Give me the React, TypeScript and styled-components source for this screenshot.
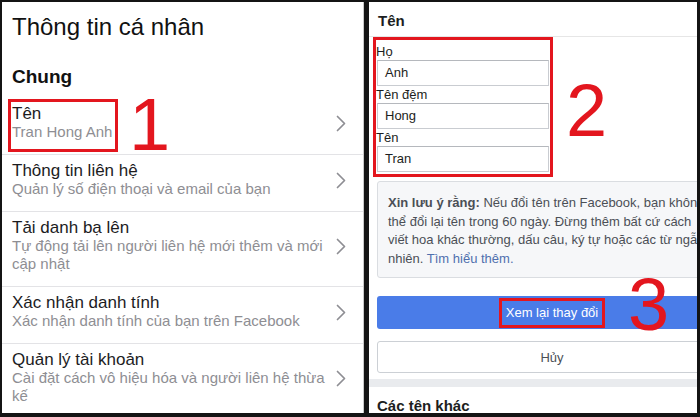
import React from "react";
import styled, { createGlobalStyle } from "styled-components";

const Global = createGlobalStyle`
  html, body { margin: 0; padding: 0; background: #141414; }
  * { box-sizing: border-box; }
`;

const RED = "#e3161e";
const FONT = `"Liberation Sans", Arial, Helvetica, sans-serif`;

const Frame = styled.div`
  width: 700px;
  height: 417px;
  background: #141414;
  display: flex;
  gap: 5px;
  padding: 2px 3px 4px 2px;
  font-family: ${FONT};
`;

const LeftPanel = styled.section`
  position: relative;
  width: 362px;
  height: 100%;
  background: #fff;
  overflow: hidden;
  border-right: 1px solid #c9c9c9;
`;

const PageTitle = styled.h1`
  margin: 0;
  padding: 10px 0 0 10px;
  font-size: 24px;
  line-height: 30px;
  font-weight: 400;
  color: #111;
`;

const SectionTitle = styled.h2`
  margin: 24px 0 10px;
  padding-left: 10px;
  font-size: 19px;
  line-height: 22px;
  font-weight: 700;
  color: #111;
`;

const Row = styled.div`
  position: relative;
  display: flex;
  align-items: center;
  padding: 7px 17px 13px 10px;
  border-bottom: 1px solid #e3e3e6;
`;

const RowText = styled.div`
  flex: 1;
  padding-right: 4px;
`;

const RowTitle = styled.div`
  font-size: 17px;
  line-height: 18px;
  color: #1c1c1e;
`;

const RowSub = styled.div`
  font-size: 15px;
  line-height: 18px;
  color: #8e8e93;
`;

const Highlight = styled.div`
  position: absolute;
  border: 3px solid ${RED};
  pointer-events: none;
`;

const Step = styled.div<{ $left: number; $top: number }>`
  position: absolute;
  left: ${(p) => p.$left}px;
  top: ${(p) => p.$top}px;
  font-family: ${FONT};
  font-size: 74px;
  line-height: 74px;
  color: ${RED};
  pointer-events: none;
`;

const Chevron = () => (
  <svg width="10" height="17" viewBox="0 0 10 17" fill="none">
    <polyline points="1.5,1.5 8.5,8.5 1.5,15.5" stroke="#8e8e93" strokeWidth="1.7" strokeLinecap="round" strokeLinejoin="round" />
  </svg>
);

const RightPanel = styled.section`
  position: relative;
  width: 328px;
  height: 100%;
  background: #fff;
  overflow: hidden;
`;

const Header = styled.div`
  padding: 10px 0 6px 9px;
  font-size: 15px;
  line-height: 18px;
  font-weight: 700;
  color: #1c1e21;
  border-bottom: 1px solid #e6e6e6;
`;

const Body = styled.div`
  width: 358px;
  padding-left: 8px;
`;

const NameForm = styled.div`
  width: 180px;
  margin: 0 0 4px -4px;
  border: 3px solid ${RED};
  padding: 3px 0 2px 0;
`;

const FieldLabel = styled.div`
  font-size: 13px;
  line-height: 17px;
  color: #1c1e21;
`;

const FieldInput = styled.div`
  height: 26px;
  margin: 0 1px;
  border: 1px solid #c9ccd1;
  border-top-color: #b5b8bd;
  padding-left: 7px;
  font-size: 13px;
  line-height: 24px;
  color: #1c1e21;
`;

const Notice = styled.div`
  width: 350px;
  background: #f6f7f9;
  border: 1px solid #dadde1;
  border-radius: 3px;
  padding: 12px 10px 9px;
  font-size: 13px;
  line-height: 18.5px;
  color: #4b4f56;
  white-space: nowrap;
`;

const Link = styled.span`
  color: #4f6fae;
`;

const PrimaryButton = styled.div`
  width: 350px;
  height: 33px;
  margin-top: 18px;
  background: #4a7ce8;
  border-radius: 3px;
  display: flex;
  align-items: center;
  justify-content: center;
  color: #fff;
  font-size: 13px;
`;

const MarkedLabel = styled.span`
  display: inline-block;
  border: 3px solid ${RED};
  padding: 4px 4px;
  line-height: 16px;
`;

const SecondaryButton = styled.div`
  width: 350px;
  height: 32px;
  margin-top: 12px;
  background: #fff;
  border: 1px solid #ccd0d5;
  border-radius: 3px;
  display: flex;
  align-items: center;
  justify-content: center;
  color: #4b4f56;
  font-size: 13px;
`;

const Band = styled.div`
  height: 8px;
  margin-top: 6px;
  background: #e9ebee;
`;

const OtherNames = styled.div`
  padding: 10px 0 0 8px;
  font-size: 15px;
  line-height: 18px;
  font-weight: 700;
  color: #1c1e21;
`;

const rows = [
  { title: "Thông tin liên hệ", sub: "Quản lý số điện thoại và email của bạn" },
  { title: "Tải danh bạ lên", sub: "Tự động tải lên người liên hệ mới thêm và mới cập nhật" },
  { title: "Xác nhận danh tính", sub: "Xác nhận danh tính của bạn trên Facebook" },
  { title: "Quản lý tài khoản", sub: "Cài đặt cách vô hiệu hóa và người liên hệ thừa kế" },
];

const fields = [
  { label: "Họ", value: "Anh" },
  { label: "Tên đệm", value: "Hong" },
  { label: "Tên", value: "Tran" },
];

export default function App() {
  return (
    <>
      <Global />
      <Frame>
        <LeftPanel>
          <PageTitle>Thông tin cá nhân</PageTitle>
          <SectionTitle>Chung</SectionTitle>
          <Row>
            <RowText>
              <RowTitle>Tên</RowTitle>
              <RowSub>Tran Hong Anh</RowSub>
            </RowText>
            <Chevron />
            <Highlight style={{ left: 6, top: 1, width: 110, height: 53 }} />
          </Row>
          {rows.map((r) => (
            <Row key={r.title}>
              <RowText>
                <RowTitle>{r.title}</RowTitle>
                <RowSub>{r.sub}</RowSub>
              </RowText>
              <Chevron />
            </Row>
          ))}
          <Step $left={127} $top={86}>1</Step>
        </LeftPanel>

        <RightPanel>
          <Header>Tên</Header>
          <Body>
            <NameForm>
              {fields.map((f) => (
                <React.Fragment key={f.label}>
                  <FieldLabel>{f.label}</FieldLabel>
                  <FieldInput>{f.value}</FieldInput>
                </React.Fragment>
              ))}
            </NameForm>
            <Notice>
              <b>Xin lưu ý rằng:</b> Nếu đổi tên trên Facebook, bạn không
              <br />
              thể đổi lại tên trong 60 ngày. Đừng thêm bất cứ cách
              <br />
              viết hoa khác thường, dấu câu, ký tự hoặc các từ ngẫu
              <br />
              nhiên. <Link>Tìm hiểu thêm.</Link>
            </Notice>
            <PrimaryButton>
              <MarkedLabel>Xem lại thay đổi</MarkedLabel>
            </PrimaryButton>
            <SecondaryButton>Hủy</SecondaryButton>
          </Body>
          <Band />
          <OtherNames>Các tên khác</OtherNames>
          <Step $left={197} $top={72}>2</Step>
          <Step $left={259} $top={266}>3</Step>
        </RightPanel>
      </Frame>
    </>
  );
}
